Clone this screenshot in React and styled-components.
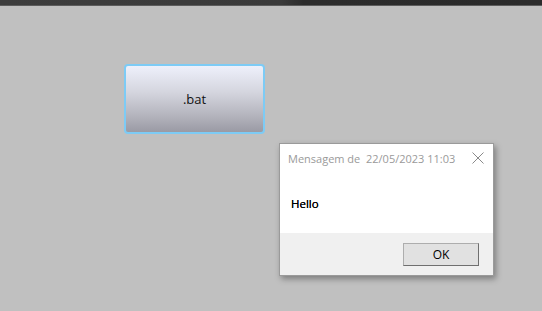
import React from 'react';
import styled, { createGlobalStyle } from 'styled-components';

const GlobalStyle = createGlobalStyle`
  html, body {
    margin: 0;
    padding: 0;
    background: #c0c0c0;
    font-family: "Open Sans", "Noto Sans", "DejaVu Sans", sans-serif;
  }
`;

const Desktop = styled.div`
  position: relative;
  width: 542px;
  height: 311px;
  background: #c0c0c0;
  overflow: hidden;
`;

const TopBar = styled.div`
  height: 5px;
  background: linear-gradient(90deg, #3d3d3d 0%, #3a3a3a 52%, #2c2c2c 56%, #2b2b2b 100%);
  border-bottom: 1px solid #5c5c5c;
`;

const Canvas = styled.div`
  padding: 58px 0 0 124px;
`;

const BatButton = styled.button`
  width: 141px;
  height: 70px;
  box-sizing: border-box;
  border: 2px solid #7dcbf5;
  border-radius: 4px;
  background: linear-gradient(180deg, #eef0fb 0%, #d4d5de 40%, #b4b4bd 75%, #9a9aa4 100%);
  font-family: "Open Sans", "Noto Sans", sans-serif;
  font-size: 13px;
  color: #111;
  padding: 0;
  cursor: pointer;
`;

const Dialog = styled.div`
  position: absolute;
  left: 279px;
  top: 143px;
  width: 215px;
  height: 133px;
  box-sizing: border-box;
  border: 1px solid #9a9a9a;
  background: #fff;
  box-shadow: 2px 3px 6px rgba(0, 0, 0, 0.35);
  display: flex;
  flex-direction: column;
`;

const TitleRow = styled.div`
  display: flex;
  align-items: center;
  justify-content: space-between;
  height: 28px;
  padding: 0 8px 0 8px;
  color: #9a9a9a;
  font-size: 11px;
  white-space: pre;
`;

const Close = styled.span`
  display: flex;
  width: 14px;
  height: 14px;
`;

const Body = styled.div`
  flex: 1;
  padding: 24px 0 0 11px;
  font-size: 11.5px;
  font-weight: 500;
  color: #000;
  text-shadow: 0 0 0.3px #000;
`;

const Footer = styled.div`
  height: 42px;
  background: #f0f0f0;
  display: flex;
  align-items: center;
  justify-content: flex-end;
  padding-right: 14px;
`;

const OkButton = styled.button`
  width: 76px;
  height: 23px;
  box-sizing: border-box;
  background: #e1e1e1;
  border: 1px solid #adadad;
  border-right-color: #6f6f6f;
  border-bottom-color: #6f6f6f;
  font-family: "Open Sans", "Noto Sans", sans-serif;
  font-size: 12px;
  color: #000;
  padding: 0;
  margin-top: 1px;
`;

const App = () => {
  return (
    <Desktop>
      <GlobalStyle />
      <TopBar />
      <Canvas>
        <BatButton type="button">.bat</BatButton>
      </Canvas>
      <Dialog>
        <TitleRow>
          <span>Mensagem de  22/05/2023 11:03</span>
          <Close>
            <svg width="14" height="14" viewBox="0 0 14 14">
              <path d="M1.5 1.5 L12.5 12.5 M12.5 1.5 L1.5 12.5" stroke="#8a8a8a" strokeWidth="1" fill="none" />
            </svg>
          </Close>
        </TitleRow>
        <Body>Hello</Body>
        <Footer>
          <OkButton type="button">OK</OkButton>
        </Footer>
      </Dialog>
    </Desktop>
  );
};

export default App;
